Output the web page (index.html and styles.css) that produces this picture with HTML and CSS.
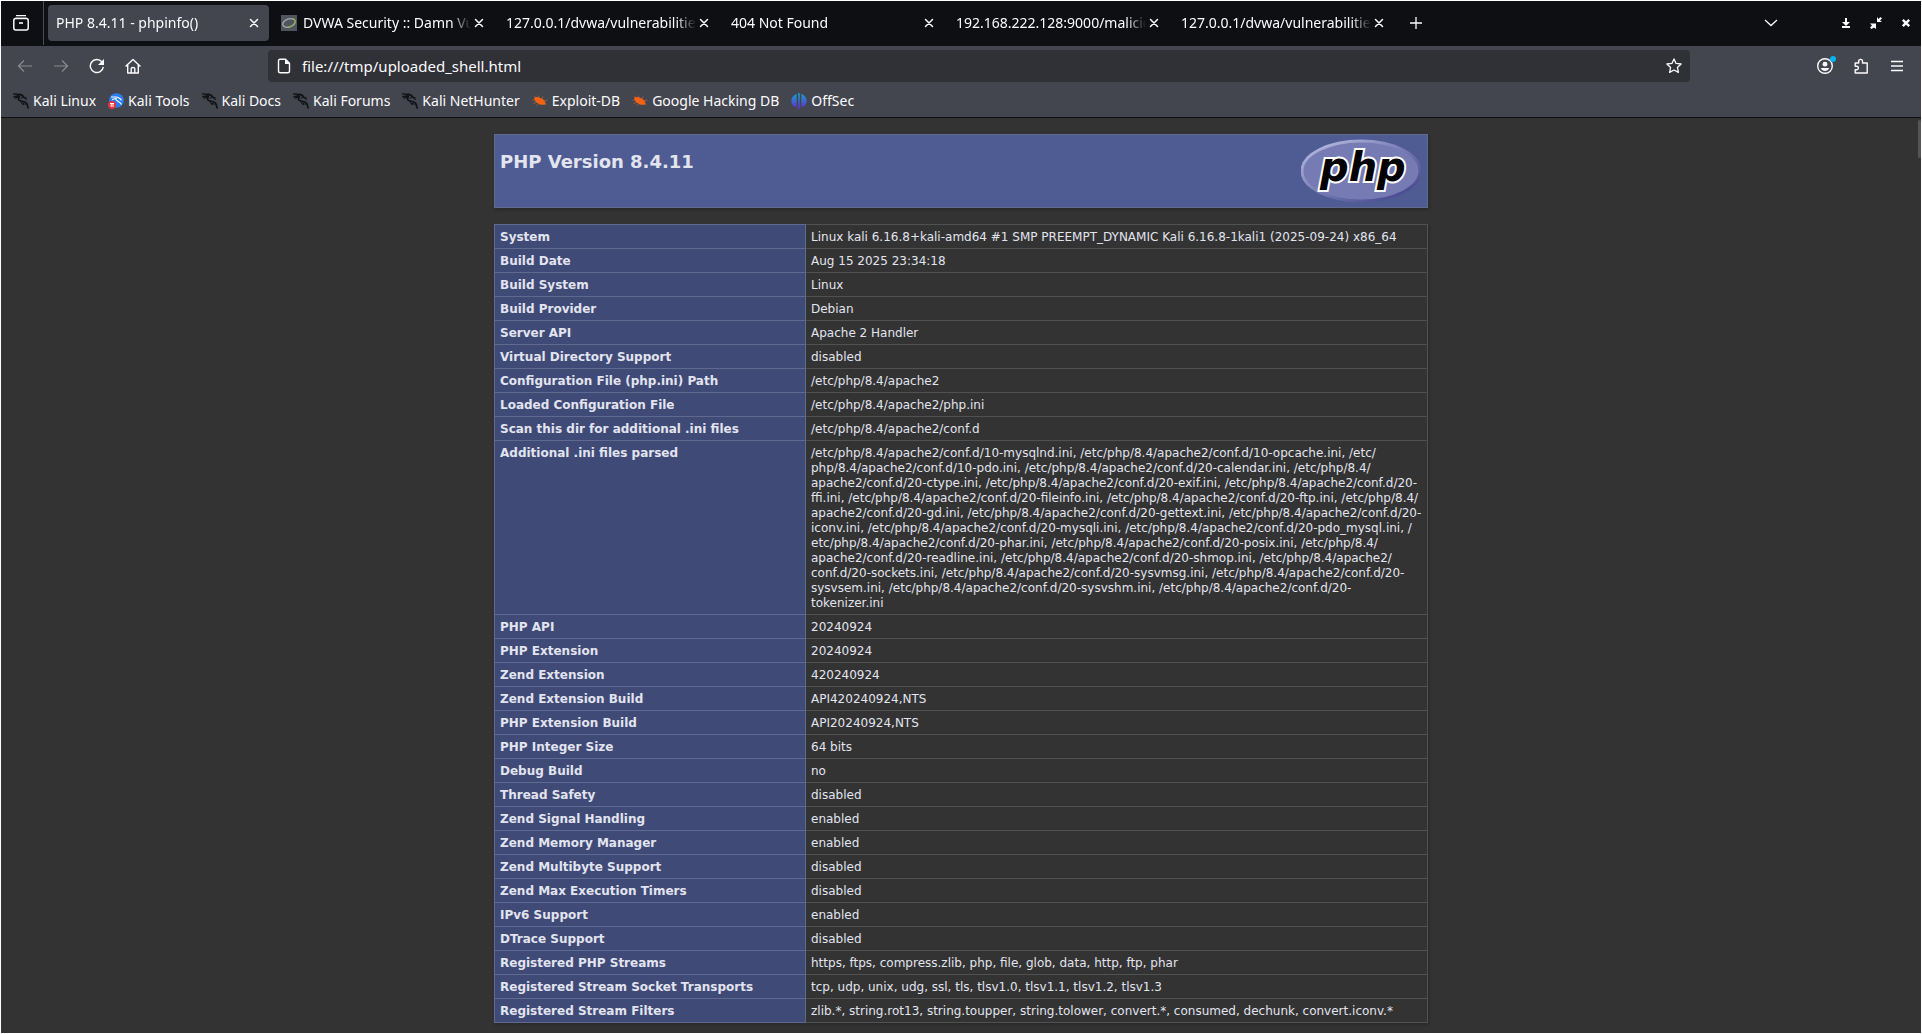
FILE: index.html
```
<!DOCTYPE html>
<html lang="en">
<head>
<meta charset="utf-8">
<title>PHP 8.4.11 - phpinfo()</title>
<link rel="stylesheet" href="styles.css">
</head>
<body>
<svg class="defs" aria-hidden="true">
  <symbol id="x" viewBox="0 0 16 16"><path d="M4.500 4.500l7 7m0-7l-7 7" fill="none" stroke="currentColor" stroke-width="1.500" stroke-linecap="round"/></symbol>
  <symbol id="dragon" viewBox="0 0 16 16"><path d="M0 .8L4 1.200 7 2.300M.3 3.800L4 3l3 .8M1.500 5.500L5 4" fill="none" stroke="currentColor" stroke-width="1.300"/><path d="M4 1.800C7 .8 9.500 2 10.500 4M6.500 3.500C4.800 5 5 7.500 8 8c3 .5 5.800 1 6.200 3.500.2 1.500.6 2.800 1.300 4" fill="none" stroke="currentColor" stroke-width="1.700"/><path d="M7.500 5.500l2.500-1.800 3.800 1.200M10 4.500l4 2.200M7.500 8.500c1 2 3.500 1.500 5 3M8.500 10.500l2.500 1.300" fill="none" stroke="currentColor" stroke-width="1"/></symbol>
  <symbol id="bug" viewBox="0 0 16 16"><path d="M2 5.200C3.500 3.500 6.500 4 8.500 5c2.500 1 4.500 2.500 5 4.800.2 1.500-.8 2.300-2.500 2C7.500 12 2.800 9.500 2 5.200z" fill="#f26212"/><path d="M3.500 4.500L2.500 3M7 4.500L6 2.500M10 6l1-2.500M12 7.800l3.500-.8M13 10.500l1 1.500M2.500 7L.5 7.500M4 9.500L1.500 10.500M6.500 11L4.500 12.500" fill="none" stroke="#b8623a" stroke-width=".7"/></symbol>
</svg>
<div class="window">
  <nav class="tabs" aria-label="Tabs">
    <button class="view" aria-label="Recent browsing"><svg class="icon" viewBox="0 0 16 16"><path d="M3 .700h10M1.800 3.300h12.400" fill="none" stroke="currentColor" stroke-width="1.300"/><rect x=".8" y="3.500" width="14.400" height="11.500" rx="2" fill="none" stroke="currentColor" stroke-width="1.500"/><path d="M6 8h4" stroke="currentColor" stroke-width="1.600"/></svg></button>
    <div class="tab active"><span class="label">PHP 8.4.11 - phpinfo()</span><button class="close" aria-label="Close tab"><svg class="icon"><use href="#x"/></svg></button></div>
    <div class="tab"><svg class="icon fav" viewBox="0 0 16 16"><path fill="#50545e" d="M0 0h16v16H0z"/><ellipse cx="8" cy="8" rx="6.500" ry="4" transform="rotate(-18 8 8)" fill="none" stroke="#a5aaad" stroke-width="1.300"/><path d="M11 3.500c3 .2 4 2.300 2.500 4.500S8.500 12 6 12" fill="none" stroke="#83a83a" stroke-width="1.200"/></svg><span class="label">DVWA Security :: Damn Vu</span><button class="close" aria-label="Close tab"><svg class="icon"><use href="#x"/></svg></button></div>
    <div class="tab"><span class="label">127.0.0.1/dvwa/vulnerabilities</span><button class="close" aria-label="Close tab"><svg class="icon"><use href="#x"/></svg></button></div>
    <div class="tab"><span class="label">404 Not Found</span><button class="close" aria-label="Close tab"><svg class="icon"><use href="#x"/></svg></button></div>
    <div class="tab"><span class="label">192.168.222.128:9000/malicio</span><button class="close" aria-label="Close tab"><svg class="icon"><use href="#x"/></svg></button></div>
    <div class="tab"><span class="label">127.0.0.1/dvwa/vulnerabilities</span><button class="close" aria-label="Close tab"><svg class="icon"><use href="#x"/></svg></button></div>
    <button class="new" aria-label="New tab"><svg class="icon" viewBox="0 0 16 16"><path d="M8 2v12M2 8h12" stroke="currentColor" stroke-width="1.300"/></svg></button>
    <button class="list" aria-label="List all tabs"><svg class="icon" viewBox="0 0 16 16"><path d="M2 5l6 5.500L14 5" fill="none" stroke="currentColor" stroke-width="1.300"/></svg></button>
    <div class="controls">
      <button aria-label="Minimize"><svg class="icon" viewBox="0 0 16 16"><path d="M7 3h2v4h3l-4 4-4-4h3zM4 11h8v2H4z" fill="currentColor"/></svg></button>
      <button aria-label="Restore"><svg class="icon" viewBox="0 0 16 16"><path d="M9 2l1.500 2L12.500 2 14 3.500 12 5.500l2 1.500H9zM2 8.500h6V14l-2-1.500L3.500 14 2 12.500 4 10.500z" fill="currentColor"/></svg></button>
      <button aria-label="Close"><svg class="icon" viewBox="0 0 16 16"><path d="M4.800 4.800l6.400 6.400m0-6.400l-6.400 6.400" stroke="currentColor" stroke-width="2.400"/></svg></button>
    </div>
  </nav>
  <div class="toolbar">
    <div class="navigation">
      <button class="dim" aria-label="Back"><svg class="icon" viewBox="0 0 16 16"><path d="M15 8H1.500M7 2.500L1.500 8 7 13.500" fill="none" stroke="currentColor" stroke-width="1.200"/></svg></button>
      <button class="dim" aria-label="Forward"><svg class="icon" viewBox="0 0 16 16"><path d="M1 8h13.500M9 2.500L14.500 8 9 13.500" fill="none" stroke="currentColor" stroke-width="1.200"/></svg></button>
      <button aria-label="Reload"><svg class="icon" viewBox="0 0 16 16"><path d="M14.300 8.800A6.500 6.500 0 1 1 12.800 3.800" fill="none" stroke="currentColor" stroke-width="1.400"/><path d="M15 1v6H9z" fill="currentColor"/></svg></button>
      <button aria-label="Home"><svg class="icon" viewBox="0 0 16 16"><path d="M1 8l7-6.500L15 8M2.700 6.700V15h10.600V6.700M6.200 15v-4.500q0-1 1.800-1t1.800 1V15" fill="none" stroke="currentColor" stroke-width="1.400" stroke-linejoin="round" stroke-linecap="round"/></svg></button>
    </div>
    <div class="address">
      <svg class="icon" viewBox="0 0 16 16"><path d="M4 1.200h5.500l4 4V13q0 1.800-1.800 1.800H4.300q-1.800 0-1.800-1.800V3q0-1.800 1.500-1.800z" fill="none" stroke="currentColor" stroke-width="1.400"/><path d="M9 1v5h5z" fill="currentColor"/></svg>
      <input type="text" aria-label="Address" value="file:///tmp/uploaded_shell.html">
      <button aria-label="Bookmark this page"><svg class="icon" viewBox="0 0 16 16"><path d="M8 .9l2.100 4.500 5 .600-3.700 3.400 1 5L8 12l-4.400 2.400 1-5L.9 6l5-.6z" fill="none" stroke="currentColor" stroke-width="1.300" stroke-linejoin="round"/></svg></button>
    </div>
    <div class="actions">
      <button class="account" aria-label="Account"><svg class="icon" viewBox="0 0 16 16"><circle cx="8" cy="8" r="7.300" fill="none" stroke="currentColor" stroke-width="1.400"/><circle cx="8" cy="6.200" r="2.400" fill="currentColor"/><path d="M3.800 10h8.400q-1.200 3-4.200 3t-4.200-3z" fill="currentColor"/></svg><span class="dot"></span></button>
      <button aria-label="Extensions"><svg class="icon" viewBox="0 0 16 16"><path d="M2.200 5h3.500V3.300a1.800 1.800 0 0 1 3.800 0V5h4.700v10H2.200v-3.300h1.500a1.700 1.700 0 0 0 0-3.400H2.200z" fill="none" stroke="currentColor" stroke-width="1.400" stroke-linejoin="round"/></svg></button>
      <button aria-label="Menu"><svg class="icon" viewBox="0 0 16 16"><path d="M2 3.500h12M2 8h12M2 12.500h12" stroke="currentColor" stroke-width="1.300"/></svg></button>
    </div>
  </div>
  <nav class="bookmarks" aria-label="Bookmarks">
    <a href="#"><svg class="icon dark"><use href="#dragon"/></svg>Kali Linux</a>
    <a href="#"><svg class="icon" viewBox="0 0 16 16"><circle cx="8.500" cy="7.500" r="7.300" fill="#2b7df2"/><path d="M3 4l5 0c3 0 4 2 5.500 3M4 6.500l4-1c-1 3 4 2 5.500 6" fill="none" stroke="#fff" stroke-width="1.100"/><circle cx="4" cy="12" r="4" fill="#e8303a"/><path d="M2 10.500h4M3.200 10.500v3.500M5 10.500v3.500" stroke="#fff"/></svg>Kali Tools</a>
    <a href="#"><svg class="icon dark"><use href="#dragon"/></svg>Kali Docs</a>
    <a href="#"><svg class="icon dark"><use href="#dragon"/></svg>Kali Forums</a>
    <a href="#"><svg class="icon dark"><use href="#dragon"/></svg>Kali NetHunter</a>
    <a href="#"><svg class="icon"><use href="#bug"/></svg>Exploit-DB</a>
    <a href="#"><svg class="icon"><use href="#bug"/></svg>Google Hacking DB</a>
    <a href="#"><svg class="icon" viewBox="0 0 16 16"><linearGradient id="g" gradientUnits="userSpaceOnUse" x1="0" y1="0" x2="0" y2="16"><stop stop-color="#12a5c8"/><stop offset="1" stop-color="#6629d8"/></linearGradient><path d="M5.600 .8v13.700Q.3 12.500.3 8T5.600 .8zM10.400 .8v13.700q5.300-2 5.300-6.500T10.400 .8zM7.200 0h1.600v16H7.200z" fill="url(#g)"/></svg>OffSec</a>
  </nav>
  <main class="page">
    <div class="thumb"></div>
    <header class="banner">
      <h1>PHP Version 8.4.11</h1>
      <svg class="logo" viewBox="0 0 121 65" role="img" aria-label="PHP logo">
        <defs><linearGradient id="rim" x2="1" y2="1"><stop stop-color="#bfc3e6"/><stop offset=".5" stop-color="#777bb3"/><stop offset="1" stop-color="#3d3c85"/></linearGradient></defs>
        <ellipse cx="60" cy="32" rx="59" ry="30" fill="#777bb3" stroke="url(#rim)" stroke-width="3"/>
        <text class="logotype" x="19" y="42">php</text>
      </svg>
    </header>
    <table class="info">
      <tbody>
      <tr><th scope="row">System</th><td>Linux kali 6.16.8+kali-amd64 #1 SMP PREEMPT_DYNAMIC Kali 6.16.8-1kali1 (2025-09-24) x86_64</td></tr>
      <tr><th scope="row">Build Date</th><td>Aug 15 2025 23:34:18</td></tr>
      <tr><th scope="row">Build System</th><td>Linux</td></tr>
      <tr><th scope="row">Build Provider</th><td>Debian</td></tr>
      <tr><th scope="row">Server API</th><td>Apache 2 Handler</td></tr>
      <tr><th scope="row">Virtual Directory Support</th><td>disabled</td></tr>
      <tr><th scope="row">Configuration File (php.ini) Path</th><td>/etc/php/8.4/apache2</td></tr>
      <tr><th scope="row">Loaded Configuration File</th><td>/etc/php/8.4/apache2/php.ini</td></tr>
      <tr><th scope="row">Scan this dir for additional .ini files</th><td>/etc/php/8.4/apache2/conf.d</td></tr>
      <tr><th scope="row">Additional .ini files parsed</th><td>/etc/php/8.4/apache2/conf.d/10-mysqlnd.ini, /etc/php/8.4/apache2/conf.d/10-opcache.ini, /etc/<br>php/8.4/apache2/conf.d/10-pdo.ini, /etc/php/8.4/apache2/conf.d/20-calendar.ini, /etc/php/8.4/<br>apache2/conf.d/20-ctype.ini, /etc/php/8.4/apache2/conf.d/20-exif.ini, /etc/php/8.4/apache2/conf.d/20-<br>ffi.ini, /etc/php/8.4/apache2/conf.d/20-fileinfo.ini, /etc/php/8.4/apache2/conf.d/20-ftp.ini, /etc/php/8.4/<br>apache2/conf.d/20-gd.ini, /etc/php/8.4/apache2/conf.d/20-gettext.ini, /etc/php/8.4/apache2/conf.d/20-<br>iconv.ini, /etc/php/8.4/apache2/conf.d/20-mysqli.ini, /etc/php/8.4/apache2/conf.d/20-pdo_mysql.ini, /<br>etc/php/8.4/apache2/conf.d/20-phar.ini, /etc/php/8.4/apache2/conf.d/20-posix.ini, /etc/php/8.4/<br>apache2/conf.d/20-readline.ini, /etc/php/8.4/apache2/conf.d/20-shmop.ini, /etc/php/8.4/apache2/<br>conf.d/20-sockets.ini, /etc/php/8.4/apache2/conf.d/20-sysvmsg.ini, /etc/php/8.4/apache2/conf.d/20-<br>sysvsem.ini, /etc/php/8.4/apache2/conf.d/20-sysvshm.ini, /etc/php/8.4/apache2/conf.d/20-<br>tokenizer.ini</td></tr>
      <tr><th scope="row">PHP API</th><td>20240924</td></tr>
      <tr><th scope="row">PHP Extension</th><td>20240924</td></tr>
      <tr><th scope="row">Zend Extension</th><td>420240924</td></tr>
      <tr><th scope="row">Zend Extension Build</th><td>API420240924,NTS</td></tr>
      <tr><th scope="row">PHP Extension Build</th><td>API20240924,NTS</td></tr>
      <tr><th scope="row">PHP Integer Size</th><td>64 bits</td></tr>
      <tr><th scope="row">Debug Build</th><td>no</td></tr>
      <tr><th scope="row">Thread Safety</th><td>disabled</td></tr>
      <tr><th scope="row">Zend Signal Handling</th><td>enabled</td></tr>
      <tr><th scope="row">Zend Memory Manager</th><td>enabled</td></tr>
      <tr><th scope="row">Zend Multibyte Support</th><td>disabled</td></tr>
      <tr><th scope="row">Zend Max Execution Timers</th><td>disabled</td></tr>
      <tr><th scope="row">IPv6 Support</th><td>enabled</td></tr>
      <tr><th scope="row">DTrace Support</th><td>disabled</td></tr>
      <tr><th scope="row">Registered PHP Streams</th><td>https, ftps, compress.zlib, php, file, glob, data, http, ftp, phar</td></tr>
      <tr><th scope="row">Registered Stream Socket Transports</th><td>tcp, udp, unix, udg, ssl, tls, tlsv1.0, tlsv1.1, tlsv1.2, tlsv1.3</td></tr>
      <tr><th scope="row">Registered Stream Filters</th><td>zlib.*, string.rot13, string.toupper, string.tolower, convert.*, consumed, dechunk, convert.iconv.*</td></tr>
      </tbody>
    </table>
  </main>
</div>
</body>
</html>
```
FILE: styles.css
```
* { box-sizing: border-box; }
body { margin: 0; background: #fff; color: #fbfbfe; font: 14px/20px "Noto Sans", sans-serif; }
button { display: flex; align-items: center; justify-content: center; flex: none; margin: 0; padding: 0; border: 0; background: none; color: inherit; font: inherit; }
.defs { position: absolute; width: 0; height: 0; }
.icon { display: block; flex: none; width: 16px; height: 16px; }
.window { display: flex; flex-direction: column; min-height: 100vh; padding: 1px; }

.tabs { display: flex; align-items: center; height: 45px; padding-bottom: 1px; background: #0e0f13; }
.view { width: 43px; height: 44px; margin-right: 4px; padding-right: 3px; border-right: 1px solid #4a4c55; }
.tab { display: flex; align-items: center; flex: 0 1 221px; min-width: 0; height: 36px; margin-right: 4px; padding: 0 7px 0 8px; border-radius: 4px; }
.tab.active { background: #44464f; }
.fav { margin-right: 6px; }
.label { flex: 1; min-width: 0; overflow: hidden; white-space: nowrap; mask-image: linear-gradient(to left, transparent, #000 20px); }
.close { width: 16px; height: 24px; }
.new { width: 36px; height: 36px; }
.list { width: 36px; height: 36px; margin-left: auto; margin-right: 42px; }
.controls { display: flex; }
.controls button { width: 30px; height: 30px; }

.toolbar { display: flex; align-items: center; height: 40px; padding-right: 6px; background: #44464f; }
.navigation, .actions { display: flex; }
.navigation { padding-left: 6px; }
.navigation button, .actions button { width: 36px; height: 32px; }
.navigation .dim { color: #888a90; }
.address { display: flex; align-items: center; flex: 1; height: 32px; margin: 0 117px; padding: 0 8px; border-radius: 4px; background: #303136; font-size: 15px; }
.address input { flex: 1; min-width: 0; margin: 0; padding: 0 10px; border: 0; outline: 0; background: none; color: inherit; font: inherit; }
.account { position: relative; }
.dot { position: absolute; top: 6px; right: 7px; width: 6px; height: 6px; border-radius: 50%; background: #00b3f4; }

.bookmarks { display: flex; align-items: center; gap: 12px; height: 32px; padding: 0 12px 1px; border-bottom: 1px solid #0e0f13; background: #44464f; }
.bookmarks a { display: flex; align-items: center; gap: 4px; color: inherit; text-decoration: none; white-space: nowrap; }
.dark { color: #101114; }

.page { position: relative; flex: 1; padding: 16px 16px 8px; background: #333; color: #e2e4ef; font: 12px/15px "DejaVu Sans", sans-serif; }
.thumb { position: absolute; top: 2px; right: 0; width: 3px; height: 38px; border-radius: 2px; background: #555; }
.banner { display: flex; justify-content: space-between; max-width: 934px; height: 74px; margin: 0 auto 16px; padding: 4px 5px; border: 1px solid #606a90; background: #4f5b93; box-shadow: 1px 2px 3px rgba(0, 0, 0, .2); }
.banner h1 { margin: 12px 0 0; font-size: 18px; line-height: 22px; }
.logo { width: 121px; height: 65px; }
.logotype { fill: #000; stroke: #fff; stroke-width: 4px; paint-order: stroke; font: italic bold 40px "DejaVu Sans", sans-serif; }
.info { width: 100%; max-width: 934px; margin: 0 auto; border-collapse: collapse; box-shadow: 1px 2px 3px rgba(0, 0, 0, .2); }
.info th, .info td { padding: 5px 5px 3px; border: 1px solid #505153; text-align: left; vertical-align: baseline; }
.info th { width: 311px; border-color: #606a90; background: #404a77; }
```
